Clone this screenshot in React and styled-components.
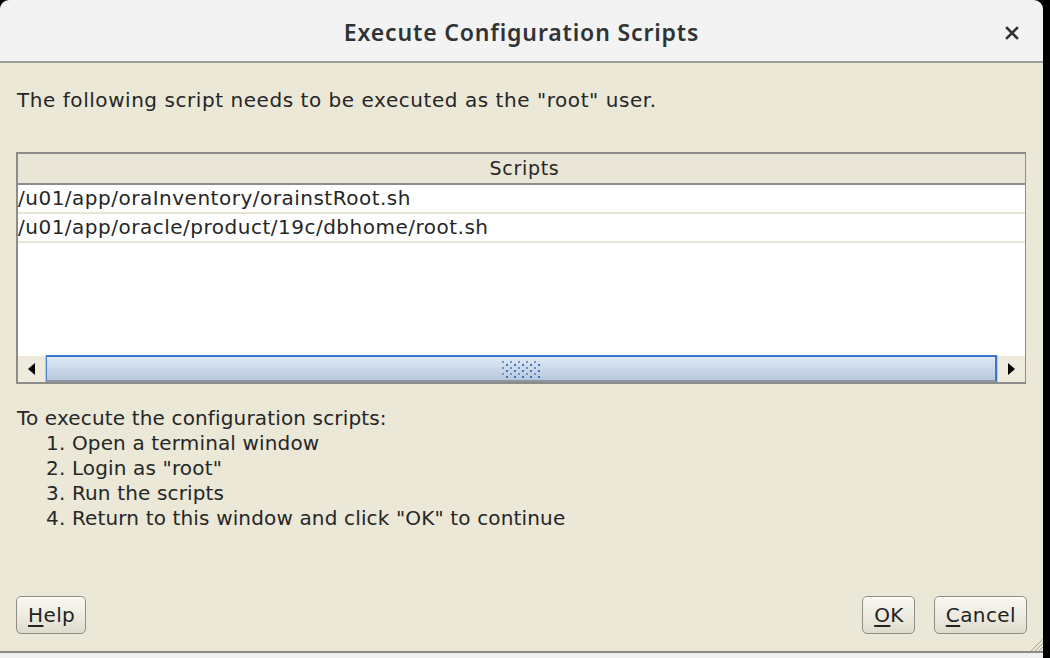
import styled, { createGlobalStyle } from "styled-components";

const GlobalStyle = createGlobalStyle`
  html, body {
    margin: 0;
    padding: 0;
    background: #000;
  }
  #root {
    width: 1050px;
    height: 658px;
    overflow: hidden;
  }
`;

const scripts = [
  "/u01/app/oraInventory/orainstRoot.sh",
  "/u01/app/oracle/product/19c/dbhome/root.sh",
];

const steps = [
  "Open a terminal window",
  'Login as "root"',
  "Run the scripts",
  'Return to this window and click "OK" to continue',
];

const App = () => {
  return (
    <>
      <GlobalStyle />
      <Dialog>
        <TitleBar>
          <Title>Execute Configuration Scripts</Title>
          <CloseButton aria-label="Close">
            <svg width="14" height="14" viewBox="0 0 14 14">
              <path d="M2 2 L12 12 M12 2 L2 12" stroke="#2e3436" strokeWidth="2.6" strokeLinecap="square" />
            </svg>
          </CloseButton>
        </TitleBar>

        <Body>
          <Message>The following script needs to be executed as the "root" user.</Message>

          <Table>
            <HeaderCell>Scripts</HeaderCell>
            <Rows>
              {scripts.map((s) => (
                <Row key={s}>{s}</Row>
              ))}
            </Rows>
            <ScrollBar>
              <ArrowButton side="left">
                <svg width="7" height="12" viewBox="0 0 7 12">
                  <path d="M7 0 L0 6 L7 12 Z" fill="#000" />
                </svg>
              </ArrowButton>
              <Track>
                <svg width="40" height="18" viewBox="0 0 40 18">
                  {[0, 1, 2, 3, 4, 5].map((r) =>
                    [0, 1, 2, 3, 4].map((c) => (
                      <rect
                        key={`${r}-${c}`}
                        x={1 + c * 8 + (r % 2) * 4}
                        y={1 + r * 3}
                        width="2"
                        height="2"
                        fill={r % 2 ? "#3f73c3" : "#6d93cf"}
                      />
                    ))
                  )}
                </svg>
              </Track>
              <ArrowButton side="right">
                <svg width="7" height="12" viewBox="0 0 7 12">
                  <path d="M0 0 L7 6 L0 12 Z" fill="#000" />
                </svg>
              </ArrowButton>
            </ScrollBar>
          </Table>

          <Instructions>
            <Line>To execute the configuration scripts:</Line>
            {steps.map((s, i) => (
              <Step key={s}>
                {i + 1}. {s}
              </Step>
            ))}
          </Instructions>

          <ButtonRow>
            <Button>
              <u>H</u>elp
            </Button>
            <RightButtons>
              <Button>
                <u>O</u>K
              </Button>
              <Button>
                <u>C</u>ancel
              </Button>
            </RightButtons>
          </ButtonRow>
          <ResizeGrip>
            <svg width="14" height="14" viewBox="0 0 14 14">
              <path d="M14 2 L2 14 M14 6 L6 14 M14 10 L10 14" stroke="#a8a595" strokeWidth="1" />
            </svg>
          </ResizeGrip>
        </Body>
        <BottomEdge />
      </Dialog>
    </>
  );
};

const Dialog = styled.div`
  width: 1043px;
  height: 658px;
  display: flex;
  flex-direction: column;
  border-radius: 9px 9px 0 0;
  overflow: hidden;
  font-family: "DejaVu Sans", sans-serif;
  color: #262626;
`;

const TitleBar = styled.div`
  height: 63px;
  flex: none;
  position: relative;
  display: flex;
  align-items: center;
  justify-content: center;
  background: #f3f3f3;
  border-bottom: 2px solid #9c9c9a;
  box-sizing: border-box;
`;

const Title = styled.div`
  font-family: "Noto Sans", sans-serif;
  font-weight: 600;
  font-size: 23px;
  letter-spacing: 0.85px;
  color: #2e3436;
  padding-top: 3px;
`;

const CloseButton = styled.div`
  position: absolute;
  right: 24px;
  top: 26px;
  width: 14px;
  height: 14px;
  display: flex;
`;

const Body = styled.div`
  flex: 1;
  position: relative;
  background: #ebe8d8;
  padding: 25px 16px 0 16px;
  display: flex;
  flex-direction: column;
  font-size: 20px;
  line-height: 25px;
`;

const Message = styled.div`
  padding-left: 1px;
  margin-bottom: 39px;
  letter-spacing: 0.55px;
`;

const Table = styled.div`
  height: 232px;
  box-sizing: border-box;
  border: 2px solid #8c8c8a;
  border-right-width: 1px;
  display: flex;
  flex-direction: column;
  background: #fff;
  margin-right: 1px;
`;

const HeaderCell = styled.div`
  height: 31px;
  flex: none;
  box-sizing: border-box;
  background: #e9e6d7;
  border-bottom: 2px solid #8d8d8b;
  text-align: center;
  line-height: 29px;
  font-size: 19px;
  letter-spacing: 0.7px;
  padding-left: 6px;
`;

const Rows = styled.div`
  flex: 1;
  background: #fff;
`;

const Row = styled.div`
  height: 29px;
  box-sizing: border-box;
  border-bottom: 2px solid #e8e5d4;
  line-height: 27px;
  font-size: 20px;
  letter-spacing: 0.5px;
  white-space: nowrap;
`;

const ScrollBar = styled.div`
  height: 27px;
  flex: none;
  display: flex;
  background: #ebe8d8;
`;

const ArrowButton = styled.div`
  width: 28px;
  flex: none;
  display: flex;
  align-items: center;
  justify-content: center;
  background: #eeebdd;
  border-top: 1px solid #fff;
  box-sizing: border-box;
  border-${(p) => (p.side === "left" ? "right" : "left")}: 1px solid #c9c6b8;
`;

const Track = styled.div`
  flex: 1;
  display: flex;
  align-items: center;
  justify-content: center;
  box-sizing: border-box;
  border-top: 2px solid #3b78cc;
  border-left: 1px solid #4a84d6;
  border-right: 2px solid #3b78cc;
  border-bottom: 2px solid #8e959e;
  background: linear-gradient(#dfe8f2 0%, #cfdceb 40%, #b8c8dc 100%);
  svg {
    margin-top: 1px;
  }
`;

const Instructions = styled.div`
  margin-top: 22px;
  padding-left: 1px;
  letter-spacing: 0.15px;
`;

const Line = styled.div``;

const Step = styled.div`
  padding-left: 29px;
`;

const ButtonRow = styled.div`
  margin-top: auto;
  margin-bottom: 17px;
  display: flex;
  justify-content: space-between;
  align-items: center;
`;

const RightButtons = styled.div`
  display: flex;
  gap: 19px;
`;

const Button = styled.div`
  height: 38px;
  box-sizing: border-box;
  padding: 0 10px 0 11px;
  display: flex;
  align-items: center;
  border: 1px solid #8f8d86;
  border-radius: 5px;
  background: linear-gradient(#f8f7f1 0%, #eeece2 50%, #dedbcd 100%);
  box-shadow: inset 0 1px 0 #fff;
  font-size: 20px;
  letter-spacing: 0.4px;
  color: #222;
  u {
    text-underline-offset: 3px;
  }
`;

const ResizeGrip = styled.div`
  position: absolute;
  right: 0;
  bottom: 0;
  width: 14px;
  height: 14px;
  display: flex;
`;

const BottomEdge = styled.div`
  height: 5px;
  flex: none;
  background: #f0f0f0;
  border-top: 2px solid #8a8a88;
`;

export default App;
